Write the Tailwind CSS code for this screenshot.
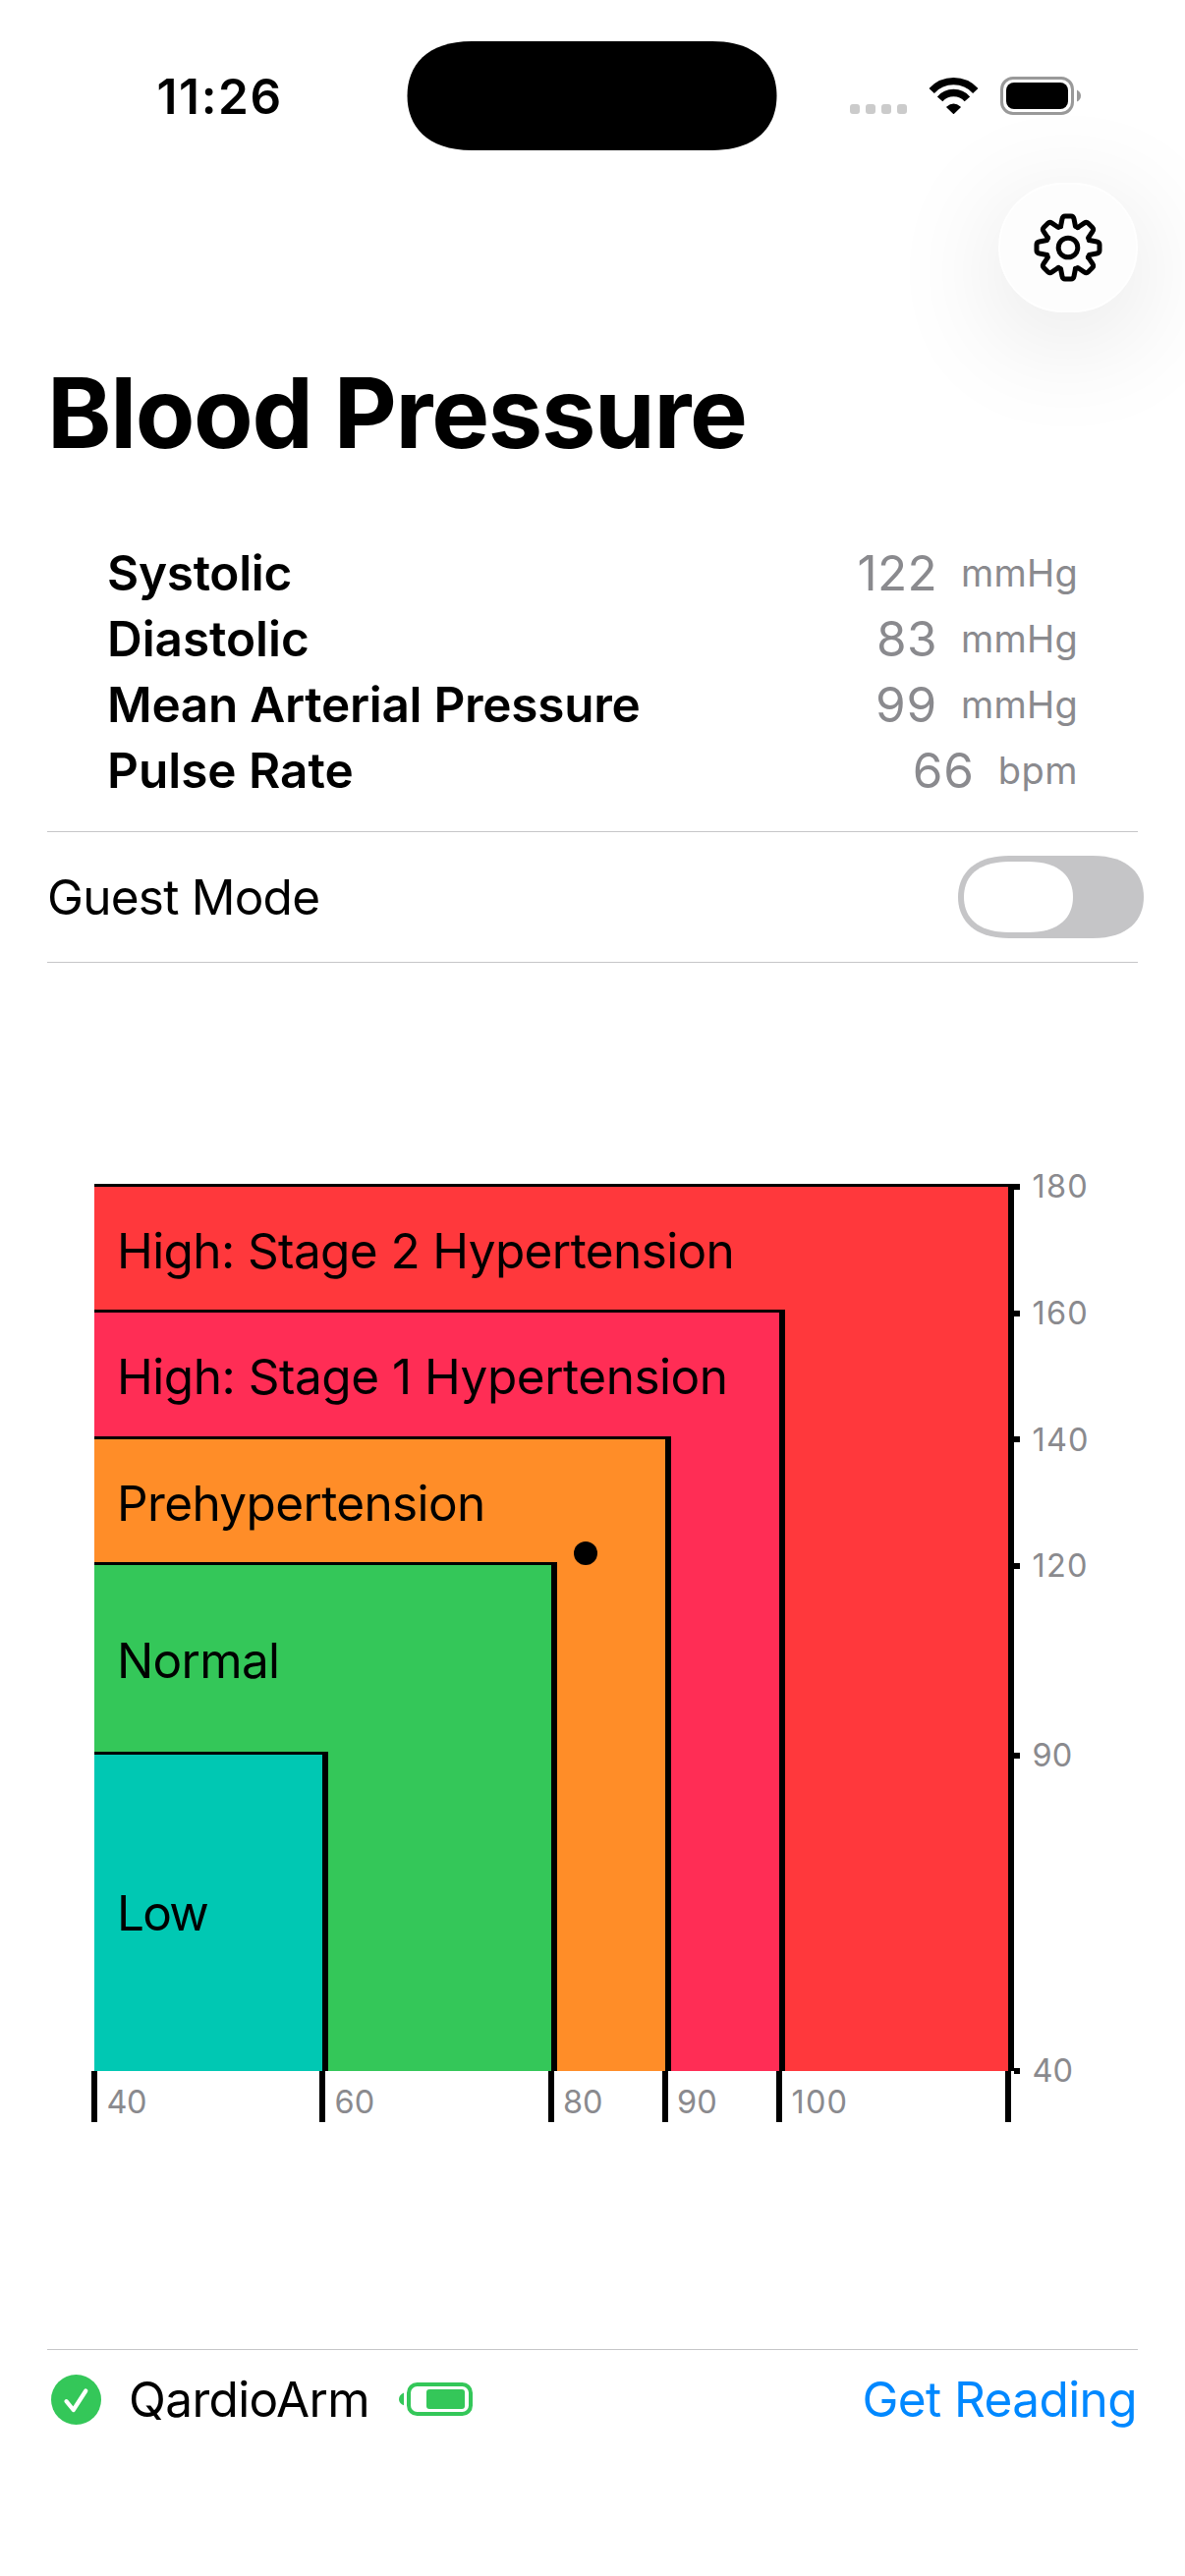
<!DOCTYPE html>
<html lang="en">
<head>
<meta charset="utf-8">
<title>Blood Pressure</title>
<script src="https://cdn.jsdelivr.net/npm/@tailwindcss/browser@4"></script>
</head>
<body class="bg-white">
<main class="flex h-[2622px] w-[1206px] flex-col overflow-hidden bg-white font-[Inter,sans-serif] text-[49.5px] leading-[67px] whitespace-nowrap text-black">

  <!-- Status bar -->
  <div class="grid h-[186px] shrink-0 grid-cols-[414px_377px_1fr] items-center pt-2">
    <div class="pt-0.5 pl-[159.5px] font-semibold tracking-[1.65px]">11:26</div>
    <svg class="h-[111px] w-[377px]" viewBox="0 0 377 111"><path d="M.5 55.5C.5 25 20 0 66 0H311C357 0 376.5 25 376.5 55.5S357 111 311 111H66C20 111 .5 86 .5 55.5Z"/></svg>
    <div class="flex items-end pt-px pl-[74px]">
      <div class="mb-px flex gap-[6px]">
        <i class="size-[10px] rounded-[3px] bg-[#cbcbcb]"></i><i class="size-[10px] rounded-[3px] bg-[#cbcbcb]"></i><i class="size-[10px] rounded-[3px] bg-[#cbcbcb]"></i><i class="size-[10px] rounded-[3px] bg-[#cbcbcb]"></i>
      </div>
      <svg class="mb-px ml-[22px] h-[38px] w-[51px]" viewBox="0 0 51 38" fill="none" stroke="#000" stroke-width="7.3">
        <path d="M3.2 14.5A30.3 30.3 0 0 1 47.8 14.5M11.6 22.8A18.5 18.5 0 0 1 39.4 22.8"/>
        <path d="M19 31Q25.5 25.6 32 31L25.5 37.2Z" fill="#000" stroke-width="1.6" stroke-linejoin="round"/>
      </svg>
      <svg class="ml-[22px] h-[39px] w-[83px]" viewBox="0 0 83 39">
        <rect x="1.5" y="1.5" width="72" height="36" rx="11.5" fill="none" stroke="#999" stroke-width="3"/>
        <rect x="6" y="6" width="63" height="27" rx="8"/>
        <path d="M78 13.5Q82 15.500 82 19.500T78 25.500Z" fill="#999"/>
      </svg>
    </div>
  </div>

  <!-- Settings button -->
  <div class="flex shrink-0 justify-end pr-12">
    <button class="flex h-[132px] w-[142px] items-center justify-center rounded-[66px] border-2 border-white bg-[#fdfdfd] shadow-[0_24px_120px_rgba(0,0,0,0.12)]" aria-label="Settings">
      <svg class="size-[72px]" viewBox="-36 -36 72 72" fill="none" stroke="#000" stroke-width="5" stroke-linecap="round" stroke-linejoin="round">
        <circle r="9.800"/>
        <g id="tooth"><path d="M-7.500-21.500-6-29.200Q-5.400-32-3-32H3Q5.400-32 6-29.200L7.500-21.500 9.900-20.500"/></g>
        <use href="#tooth" transform="rotate(45)"/><use href="#tooth" transform="rotate(90)"/><use href="#tooth" transform="rotate(135)"/><use href="#tooth" transform="rotate(180)"/><use href="#tooth" transform="rotate(225)"/><use href="#tooth" transform="rotate(270)"/><use href="#tooth" transform="rotate(315)"/>
      </svg>
    </button>
  </div>

  <h1 class="mt-[42px] shrink-0 pl-12 text-[99px] leading-[120px] font-bold tracking-[-1.31px]">Blood Pressure</h1>

  <!-- Readings -->
  <dl class="mt-[70px] shrink-0 pr-[109px] pl-[109px]">
    <div class="flex justify-between"><dt class="font-semibold tracking-[-0.29px]">Systolic</dt><dd class="flex gap-6 tracking-[0.34px] text-[#8a8a8e]">122<span class="text-[38px] tracking-[0.23px]">mmHg</span></dd></div>
    <div class="flex justify-between"><dt class="font-semibold tracking-[-0.06px]">Diastolic</dt><dd class="flex gap-6 tracking-[0.38px] text-[#8a8a8e]">83<span class="text-[38px] tracking-[0.23px]">mmHg</span></dd></div>
    <div class="flex justify-between"><dt class="font-semibold tracking-[-0.28px]">Mean Arterial Pressure</dt><dd class="flex gap-6 tracking-[0.8px] text-[#8a8a8e]">99<span class="text-[38px] tracking-[0.23px]">mmHg</span></dd></div>
    <div class="flex justify-between"><dt class="font-semibold tracking-[-0.02px]">Pulse Rate</dt><dd class="flex gap-6 tracking-[0.8px] text-[#8a8a8e]">66<span class="text-[38px] tracking-[0.48px]">bpm</span></dd></div>
  </dl>

  <!-- Guest mode -->
  <div class="mx-12 mt-[28px] flex h-[134px] shrink-0 items-center justify-between border-y border-[#c6c6c8]">
    <span class="tracking-[-0.76px]">Guest Mode</span>
    <svg class="-mr-[6px] h-[84px] w-[189px]" viewBox="0 0 189 84">
      <path d="M0 42C0 19 15.500 0 52 0H137C173.500 0 189 19 189 42S173.500 84 137 84H52C15.500 84 0 65 0 42Z" fill="#c5c5c7"/>
      <path d="M6 42C6 22 19 6 52 6H71C104 6 117 22 117 42S104 78 71 78H52C19 78 6 62 6 42Z" fill="#fff"/>
    </svg>
  </div>

  <!-- Chart: x = 96 + 11.625 * (diastolic - 40), y = 3 + 6.4286 * (180 - systolic) -->
  <section class="relative mt-[225px] h-[960px] shrink-0">
    <div class="absolute top-0 left-24 h-[903px] w-[936px] border-t-3 border-r-6 border-black bg-[#ff383c] pl-[23px] leading-[130px] tracking-[-0.61px]">High: Stage 2 Hypertension</div>
    <div class="absolute top-[128.400px] left-24 h-[774.600px] w-[703px] border-t-3 border-r-6 border-black bg-[#ff2d55] pl-[23px] leading-[130px] tracking-[-0.48px]">High: Stage 1 Hypertension</div>
    <div class="absolute top-[257px] left-24 h-[646px] w-[587px] border-t-3 border-r-6 border-black bg-[#ff8d28] pl-[23px] leading-[130px] tracking-[-0.63px]">Prehypertension</div>
    <div class="absolute top-[385.400px] left-24 h-[517.600px] w-[471px] border-t-3 border-r-6 border-black bg-[#34c759] pl-[23px] leading-[194px] tracking-[-0.71px]">Normal</div>
    <div class="absolute top-[578.400px] left-24 h-[324.600px] w-[238px] border-t-3 border-r-6 border-black bg-[#00c8b3] pl-[23px] leading-[322px] tracking-[-1.8px]">Low</div>
    <i class="absolute top-[364px] left-[584px] size-6 rounded-full bg-black"></i>

    <div class="text-[32.5px] leading-10 text-[#8a8a8e]">
      <!-- Systolic axis -->
      <i class="absolute top-0 left-[1032px] h-[6px] w-[6px] bg-black"></i><span class="absolute top-[-17px] left-[1050.500px] tracking-[1.2px]">180</span>
      <i class="absolute top-[129px] left-[1032px] h-[6px] w-[6px] bg-black"></i><span class="absolute top-[112px] left-[1050.500px] tracking-[1.2px]">160</span>
      <i class="absolute top-[257px] left-[1032px] h-[6px] w-[6px] bg-black"></i><span class="absolute top-[241px] left-[1050.500px] tracking-[1.2px]">140</span>
      <i class="absolute top-[386px] left-[1032px] h-[6px] w-[6px] bg-black"></i><span class="absolute top-[369px] left-[1050.500px] tracking-[1.2px]">120</span>
      <i class="absolute top-[579px] left-[1032px] h-[6px] w-[6px] bg-black"></i><span class="absolute top-[562px] left-[1050.500px] tracking-[0.2px]">90</span>
      <i class="absolute top-[900px] left-[1032px] h-[6px] w-[6px] bg-black"></i><span class="absolute top-[883px] left-[1050.500px] tracking-[0.1px]">40</span>
      <!-- Diastolic axis -->
      <i class="absolute top-[903px] left-[93px] h-[52px] w-[6px] bg-black"></i><span class="absolute top-[915px] left-[108.500px] tracking-[-0.5px]">40</span>
      <i class="absolute top-[903px] left-[325.400px] h-[52px] w-[6px] bg-black"></i><span class="absolute top-[915px] left-[340.500px]">60</span>
      <i class="absolute top-[903px] left-[558px] h-[52px] w-[6px] bg-black"></i><span class="absolute top-[915px] left-[573px]">80</span>
      <i class="absolute top-[903px] left-[674px] h-[52px] w-[6px] bg-black"></i><span class="absolute top-[915px] left-[689px]">90</span>
      <i class="absolute top-[903px] left-[790.400px] h-[52px] w-[6px] bg-black"></i><span class="absolute top-[915px] left-[805.500px] tracking-[1.2px]">100</span>
      <i class="absolute top-[903px] left-[1023px] h-[52px] w-[6px] bg-black"></i>
    </div>
  </section>

  <!-- Device footer -->
  <footer class="mx-12 mt-[226px] flex h-[101px] shrink-0 items-center border-t border-[#c6c6c8]">
    <svg class="ml-1 size-[51px]" viewBox="0 0 51 51"><circle cx="25.500" cy="25.500" r="25.500" fill="#34c759"/><path d="M15.500 27.200 22.700 36 35.300 16.500" fill="none" stroke="#fff" stroke-width="4.200" stroke-linecap="round" stroke-linejoin="round"/></svg>
    <span class="ml-[28px] tracking-[-0.63px]">QardioArm</span>
    <svg class="ml-[30px] h-[34px] w-[75px]" viewBox="0 0 75 34" fill="#34c759">
      <rect x="10" y="2" width="63" height="30" rx="8.500" fill="none" stroke="#34c759" stroke-width="4"/>
      <rect x="28" y="7" width="39" height="20" rx="3"/>
      <path d="M5 10.500Q0 12.500 0 17T5 23.300Z"/>
    </svg>
    <button class="mr-px ml-auto tracking-[-0.6px] text-[#0088ff]">Get Reading</button>
  </footer>
</main>
</body>
</html>
